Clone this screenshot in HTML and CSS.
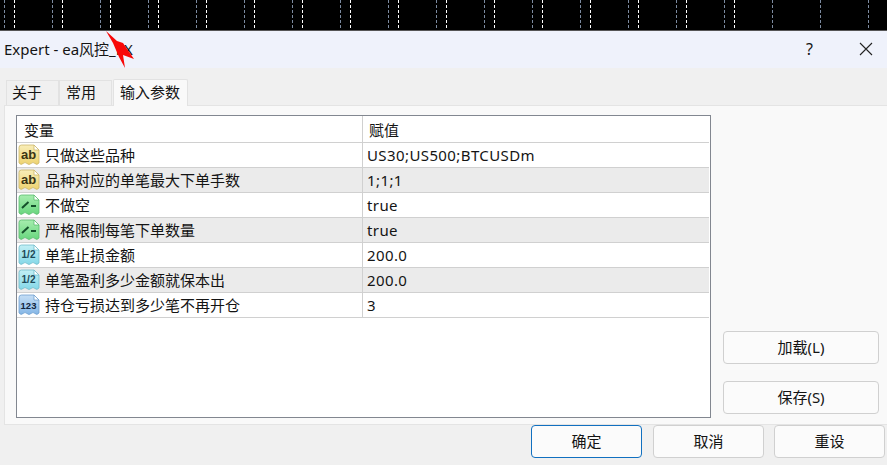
FILE: index.html
```html
<!DOCTYPE html>
<html lang="zh-CN">
<head>
<meta charset="utf-8">
<title>Expert - ea风控_EX</title>
<link rel="stylesheet" href="styles.css">
</head>
<body>
<svg class="defs" width="0" height="0" aria-hidden="true">
  <defs>
    <linearGradient id="gStr" x1="0" y1="0" x2="0" y2="1"><stop offset="0" stop-color="#f8edb8"/><stop offset="1" stop-color="#eed36f"/></linearGradient>
    <linearGradient id="gBool" x1="0" y1="0" x2="0" y2="1"><stop offset="0" stop-color="#a6edae"/><stop offset="1" stop-color="#68d67e"/></linearGradient>
    <linearGradient id="gDbl" x1="0" y1="0" x2="0" y2="1"><stop offset="0" stop-color="#c2eff5"/><stop offset="1" stop-color="#84d8e8"/></linearGradient>
    <linearGradient id="gInt" x1="0" y1="0" x2="0" y2="1"><stop offset="0" stop-color="#c5def5"/><stop offset="1" stop-color="#84b6e6"/></linearGradient>
    <symbol id="page" viewBox="0 0 22 22">
      <path d="M1 3.5Q1 1 3.5 1H16L21 6V19Q19 21.5 17 19.5Q15 17.5 13 19.5Q11 21.5 9 19.5Q7 17.5 5 19.5Q3 21.5 1 19Z"/>
      <path class="fold" d="M16 1V6H21Z"/>
    </symbol>
    <pattern id="grayDash" width="48" height="5" patternUnits="userSpaceOnUse">
      <rect x="4" y="0" width="1" height="3" fill="#7c8ba0"/>
    </pattern>
    <pattern id="whiteDash" width="48" height="5" patternUnits="userSpaceOnUse">
      <rect x="14" y="0" width="1" height="3" fill="#fff"/>
    </pattern>
  </defs>
</svg>

<div class="chart">
  <svg class="chart-lines" width="887" height="30" aria-hidden="true">
    <rect width="887" height="30" fill="url(#grayDash)"/>
    <rect width="740" height="30" fill="url(#whiteDash)"/>
  </svg>
</div>

<main class="dialog">
  <header class="titlebar">
    <span class="title">Expert - ea风控_EX</span>
    <span class="help">?</span>
    <svg class="close" width="14" height="14" viewBox="0 0 14 14" aria-hidden="true"><path d="M1 1L13 13M13 1L1 13"/></svg>
  </header>

  <nav class="tabs">
    <span class="tab">关于</span>
    <span class="tab">常用</span>
    <span class="tab tab-active">输入参数</span>
  </nav>

  <section class="panel">
    <div class="table">
      <div class="row head"><span class="name">变量</span><span class="value">赋值</span></div>

      <div class="row">
        <span class="name"><svg class="icon i-str" viewBox="0 0 22 22"><use href="#page"/><text x="10.5" y="14.5" class="glyph">ab</text></svg>只做这些品种</span>
        <span class="value">US30;US500;BTCUSDm</span>
      </div>
      <div class="row alt">
        <span class="name"><svg class="icon i-str" viewBox="0 0 22 22"><use href="#page"/><text x="10.5" y="14.5" class="glyph">ab</text></svg>品种对应的单笔最大下单手数</span>
        <span class="value">1;1;1</span>
      </div>
      <div class="row">
        <span class="name"><svg class="icon i-bool" viewBox="0 0 22 22"><use href="#page"/><path class="mark" d="M4 14L10.5 8M13 12H18"/></svg>不做空</span>
        <span class="value">true</span>
      </div>
      <div class="row alt">
        <span class="name"><svg class="icon i-bool" viewBox="0 0 22 22"><use href="#page"/><path class="mark" d="M4 14L10.5 8M13 12H18"/></svg>严格限制每笔下单数量</span>
        <span class="value">true</span>
      </div>
      <div class="row">
        <span class="name"><svg class="icon i-dbl" viewBox="0 0 22 22"><use href="#page"/><text x="10.5" y="14" class="glyph glyph-frac">1/2</text></svg>单笔止损金额</span>
        <span class="value">200.0</span>
      </div>
      <div class="row alt">
        <span class="name"><svg class="icon i-dbl" viewBox="0 0 22 22"><use href="#page"/><text x="10.5" y="14" class="glyph glyph-frac">1/2</text></svg>单笔盈利多少金额就保本出</span>
        <span class="value">200.0</span>
      </div>
      <div class="row">
        <span class="name"><svg class="icon i-int" viewBox="0 0 22 22"><use href="#page"/><text x="10.5" y="14.5" class="glyph glyph-sm">123</text></svg>持仓亏损达到多少笔不再开仓</span>
        <span class="value">3</span>
      </div>
    </div>

    <aside class="side">
      <button class="btn side-btn" type="button"><span class="btn-label">加载(L)</span></button>
      <button class="btn side-btn" type="button"><span class="btn-label">保存(S)</span></button>
    </aside>
  </section>

  <footer class="footer">
    <button class="btn foot-btn default" type="button"><span class="btn-label">确定</span></button>
    <button class="btn foot-btn" type="button"><span class="btn-label">取消</span></button>
    <button class="btn foot-btn" type="button"><span class="btn-label">重设</span></button>
  </footer>
</main>

<svg class="arrow" width="40" height="40" viewBox="0 0 40 40" aria-hidden="true">
  <polygon points="1,1 12,11 18,13 22,19 29,29 18,25 20,38 14,27 8,13" fill="#f80808"/>
</svg>
</body>
</html>
```
FILE: styles.css
```css
* { box-sizing: border-box; }
html, body { margin: 0; padding: 0; }
body {
  width: 887px;
  height: 465px;
  overflow: hidden;
  position: relative;
  background: #f0f0f0;
  font-family: "Noto Sans", "Noto Sans CJK SC", sans-serif;
  font-size: 15px;
  color: #141414;
}
.defs { position: absolute; }

.chart { height: 31px; background: #000; border-bottom: 1px solid #555; }
.chart-lines { display: block; }

.dialog { display: flex; flex-direction: column; height: 434px; }

.titlebar {
  height: 37px;
  background: #eff2fb;
  display: flex;
  align-items: center;
  padding: 0 14px 2px 4px;
}
.title { flex: 1; }
.help { font-size: 16px; margin-right: 46px; }
.close { fill: none; stroke: #222; stroke-width: 1.1; margin-top: 1px; }

.tabs {
  height: 37px;
  display: flex;
  align-items: flex-end;
  padding-left: 6px;
}
.tab {
  width: 53px;
  height: 25px;
  padding: 0 0 3px 6px;
  border: 1px solid #e2e2e2;
  border-bottom: 0;
  background: #f0f0f0;
  display: flex;
  align-items: center;
}
.tab:first-child { padding-left: 5px; }
.tab-active {
  width: 75px;
  height: 27px;
  margin-left: 1px;
  background: #f9f9f9;
  border-radius: 2px 2px 0 0;
  position: relative;
  top: 1px;
}

.panel {
  margin-left: 4px;
  height: 320px;
  background: #f9f9f9;
  border-top: 1px solid #e4e4e4;
  border-left: 1px solid #e4e4e4;
  border-bottom: 1px solid #e4e4e4;
  padding: 9px 8px 7px 11px;
  display: flex;
}
.table {
  width: 695px;
  height: 303px;
  background: #fff;
  border: 1px solid #828790;
}
.row {
  display: grid;
  grid-template-columns: 346px 1fr;
  height: 25px;
  border-bottom: 1px solid #d0d0d0;
  margin-right: 1px;
}
.row.alt { background: #ebebeb; }
.row.head { height: 27px; }
.name, .value { display: flex; align-items: center; white-space: nowrap; padding-bottom: 1px; }
.name { padding-left: 1px; border-right: 1px solid #d0d0d0; }
.head .name, .head .value { padding-bottom: 0; }
.head .name { padding-left: 7px; }
.value { padding-left: 4px; letter-spacing: 0.4px; }
.head .value { padding-left: 6px; letter-spacing: 0; }

.icon {
  width: 22px;
  height: 22px;
  margin-right: 5px;
  flex: none;
  fill: var(--body);
  stroke: var(--line);
  stroke-width: 0.8;
}
.fold { fill: #fff; stroke: var(--line); }
.i-str { --body: url(#gStr); --line: #cdb86a; }
.i-bool { --body: url(#gBool); --line: #5cbd70; }
.i-dbl { --body: url(#gDbl); --line: #72bccb; }
.i-int { --body: url(#gInt); --line: #6fa0cf; }
.glyph {
  font-family: "Liberation Sans", sans-serif;
  font-size: 13px;
  font-weight: 700;
  fill: #3a3414;
  stroke: none;
  text-anchor: middle;
}
.glyph-sm { font-size: 9.5px; fill: #10243e; }
.glyph-frac { font-size: 10px; fill: #1d4a58; }
.mark { fill: none; stroke: #14502a; stroke-width: 2; }

.side {
  margin-left: 12px;
  padding-top: 216px;
  display: flex;
  flex-direction: column;
  gap: 17px;
}
.btn {
  height: 33px;
  font: inherit;
  color: #141414;
  background: #fbfbfb;
  border: 1px solid #d0d0d0;
  border-radius: 4px;
  padding: 0 0 2px;
}
.side-btn { width: 156px; }

.footer {
  display: flex;
  justify-content: flex-end;
  gap: 10px;
  padding-right: 2px;
}
.foot-btn { width: 111px; }
.default { border-color: #1170c0; margin-right: 1px; }

.arrow { position: absolute; left: 105px; top: 30px; }
```
